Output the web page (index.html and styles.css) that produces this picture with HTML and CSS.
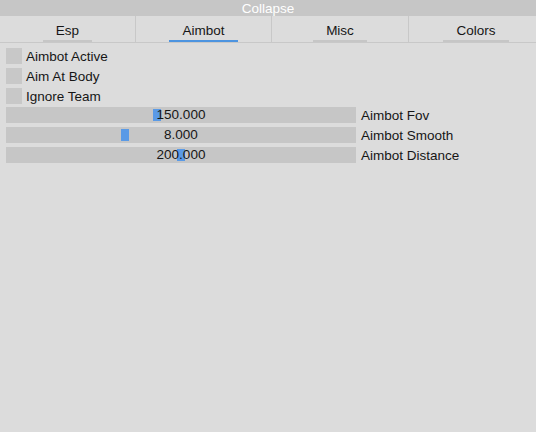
FILE: index.html
```html
<!DOCTYPE html>
<html lang="en">
<head>
  <meta charset="UTF-8" />
  <title>Menu</title>
  <link rel="stylesheet" href="styles.css">
</head>
<body>
  <div class="title-bar">Collapse</div>

  <div class="tabs">
    <div class="tab"><span>Esp</span></div>
    <div class="tab active"><span>Aimbot</span></div>
    <div class="tab"><span>Misc</span></div>
    <div class="tab"><span>Colors</span></div>
  </div>

  <div class="content">
    <label class="check-row"><span class="check-box"></span>Aimbot Active</label>
    <label class="check-row"><span class="check-box"></span>Aim At Body</label>
    <label class="check-row"><span class="check-box"></span>Ignore Team</label>

    <div class="slider-row">
      <div class="slider"><span class="grab" style="left: 147px"></span><span class="value">150.000</span></div>
      <span class="slider-label">Aimbot Fov</span>
    </div>
    <div class="slider-row">
      <div class="slider"><span class="grab" style="left: 115px"></span><span class="value">8.000</span></div>
      <span class="slider-label">Aimbot Smooth</span>
    </div>
    <div class="slider-row">
      <div class="slider"><span class="grab" style="left: 171px"></span><span class="value">200.000</span></div>
      <span class="slider-label">Aimbot Distance</span>
    </div>
  </div>
</body>
</html>
```

FILE: styles.css
```css
body {
  margin: 0;
  overflow: hidden;
  background-color: #dcdcdc;
  font-family: 'Liberation Sans', Arial, sans-serif;
  font-size: 13.5px;
  color: #161616;
}

.title-bar {
  height: 16px;
  line-height: 18px;
  background-color: #c6c6c6;
  color: #fff;
  text-align: center;
}

.tabs {
  display: grid;
  grid-template-columns: 136px 136px 137px 134px;
  height: 26px;
  border-bottom: 1px solid #c8c8c8;
}

.tab {
  display: flex;
  justify-content: center;
  border-right: 1px solid #c8c8c8;
}

.tab:last-child {
  border-right: none;
}

.tab span {
  padding: 7px 13px 0;
  height: 17px;
  border-bottom: 2px solid #c6c6c6;
}

.tab.active span {
  border-bottom-color: #4d94e0;
}

.content {
  display: flex;
  flex-direction: column;
  gap: 4px;
  padding: 5px 6px;
}

.check-row {
  display: flex;
  align-items: center;
  gap: 4px;
  height: 16px;
}

.check-box {
  width: 16px;
  height: 16px;
  background-color: #c8c8c8;
}

.check-row + .slider-row {
  margin-top: -1px;
}

.slider-row {
  display: flex;
  align-items: center;
  gap: 5px;
  height: 16px;
}

.slider {
  position: relative;
  width: 350px;
  height: 16px;
  line-height: 16px;
  background-color: #c6c6c6;
  text-align: center;
}

.grab {
  position: absolute;
  top: 2px;
  width: 8px;
  height: 12px;
  background-color: #5a9ae6;
}

.value {
  position: relative;
}
```
